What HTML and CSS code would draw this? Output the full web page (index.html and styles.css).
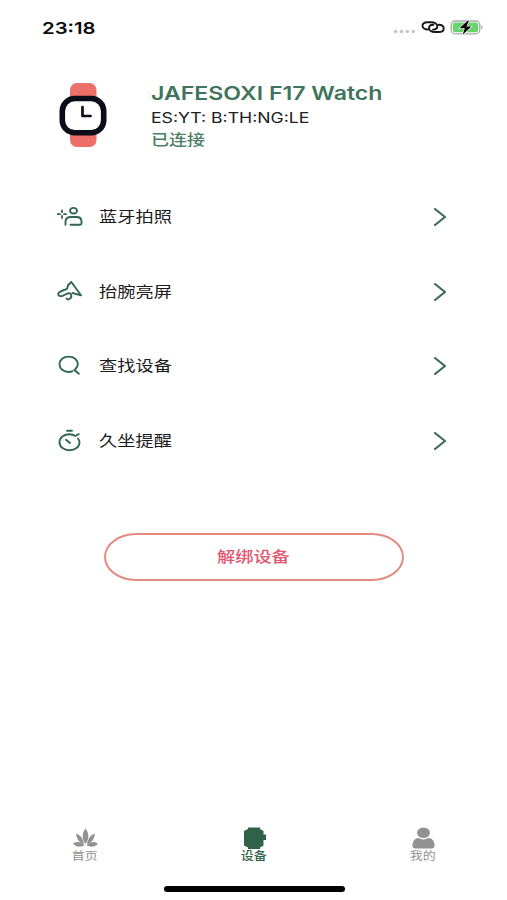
FILE: index.html
```html
<!DOCTYPE html>
<html lang="zh-CN">
<head>
<meta charset="utf-8">
<title>设备</title>
<link rel="stylesheet" href="styles.css">
</head>
<body>
<main class="screen">
  <header class="status">
    <span class="clock wide">23:18</span>
    <svg class="status-icons" viewBox="0 0 92 20" width="92" height="20">
      <g fill="#c6c6c8"><circle cx="3.500" cy="13.500" r="1.800"/><circle cx="9.500" cy="13.500" r="1.800"/><circle cx="15.300" cy="13.500" r="1.800"/><circle cx="21.300" cy="13.500" r="1.800"/></g>
      <g fill="none" stroke="#17171b" stroke-width="1.900" stroke-linecap="round">
        <path d="M36 11.500C33 11.500 30.500 10 30.500 7.800C30.500 5.600 32.500 4.200 35.500 4.200H39C42.500 4.200 45.300 5.800 45.300 8.200C45.300 10.300 43.500 11.600 41 11.600"/>
        <path d="M41.500 6.700C38.500 6.700 37 8 37 10C37 12.400 39.500 14 43 14H46.500C49.800 14 51.700 12.500 51.700 10.400C51.700 8.200 49.500 6.900 46.500 6.800"/>
      </g>
      <rect x="59.200" y="3" width="28.600" height="12.800" rx="4" fill="#fff" stroke="#aaa9ac" stroke-width="1.300"/>
      <rect x="60.800" y="4.600" width="25.400" height="9.600" rx="2.500" fill="#68d46b"/>
      <path d="M89.300 7.300Q91.600 9.300 89.300 11.300Z" fill="#8e8e90"/>
      <path d="M75.500 2.800L67.500 10.300H72.800L70.700 16.800L79.300 8.500H74.400L77 2.800Z" fill="#000" stroke="#fff" stroke-width="1.200" paint-order="stroke"/>
    </svg>
  </header>

  <section class="device">
    <svg class="watch" viewBox="0 0 48 66" width="48" height="66">
      <rect x="11" y="1" width="26.500" height="64" rx="7" fill="#ed6f69"/>
      <rect x="3.300" y="16.500" width="41.400" height="34.300" rx="12.500" fill="#fff" stroke="#0c0c18" stroke-width="5.600"/>
      <path d="M23.500 25.200V34H31.500" fill="none" stroke="#0c0c18" stroke-width="2.700" stroke-linecap="round" stroke-linejoin="round"/>
    </svg>
    <div class="info">
      <h1 class="name wide">JAFESOXI F17 Watch</h1>
      <p class="address wide">ES:YT: B:TH:NG:LE</p>
      <p class="state wide">已连接</p>
    </div>
  </section>

  <nav class="options">
    <a class="option">
      <svg class="icon" viewBox="0 0 28 24" width="28" height="24">
        <ellipse cx="17.500" cy="5.700" rx="3.500" ry="2.800"/>
        <path d="M9.500 19.800V17Q9.500 12 15 12H20.500Q25.500 12 25.500 16.500V18.300Q25.500 19.800 24 19.800H14.500"/>
        <path d="M6 5.300V7.200M6 11V13M1.800 9.200H4M8 9.200H10" stroke-width="1.800"/>
      </svg>
      <span class="label wide">蓝牙拍照</span>
      <svg class="chevron" viewBox="0 0 14 20" width="14" height="20"><path d="M2 2L12 10L2 18"/></svg>
    </a>
    <a class="option">
      <svg class="icon" viewBox="0 0 28 24" width="28" height="24">
        <path d="M12.300 5L15.300 2L25 15.300L16.500 13"/>
        <path d="M12.300 5L11 8.800L4.500 11.500Q1.500 13 2.500 15Q3.500 16.700 6.500 15.800L11.500 13.500Q14.500 12.500 15.200 15Q16 17.500 13.500 19Q11.500 20 10.500 18.500"/>
      </svg>
      <span class="label wide">抬腕亮屏</span>
      <svg class="chevron" viewBox="0 0 14 20" width="14" height="20"><path d="M2 2L12 10L2 18"/></svg>
    </a>
    <a class="option">
      <svg class="icon" viewBox="0 0 28 24" width="28" height="24">
        <path d="M16.500 17.200Q14.800 18 12.700 18C7.500 18 3.500 14.800 3.500 10.300S7.500 2.600 12.700 2.600S21.800 5.800 21.800 10.300Q21.800 12.800 19.500 15L18.300 16L22.800 19.800"/>
      </svg>
      <span class="label wide">查找设备</span>
      <svg class="chevron" viewBox="0 0 14 20" width="14" height="20"><path d="M2 2L12 10L2 18"/></svg>
    </a>
    <a class="option">
      <svg class="icon" viewBox="0 0 28 24" width="28" height="24">
        <path d="M22 9.500Q23.500 11.300 23.500 13.300C23.500 18 19 21.300 13.500 21.300S3.500 18 3.500 13.300S8 5.300 13.500 5.300Q16.500 5.300 19.500 7L22.800 5M11 1.800H16M10 10.800L14 14"/>
      </svg>
      <span class="label wide">久坐提醒</span>
      <svg class="chevron" viewBox="0 0 14 20" width="14" height="20"><path d="M2 2L12 10L2 18"/></svg>
    </a>
  </nav>

  <button class="unbind"><span class="unbind-text">解绑设备</span></button>

  <footer class="tabs">
    <a class="tab">
      <svg class="tab-icon" viewBox="0 0 28 24" width="28" height="24" fill="#929292">
        <path d="M14.500 1.500C18.500 7 18 12.500 14.500 17C11 12.500 10.500 7 14.500 1.500Z"/>
        <path d="M5 6.500C9.500 8 12 11.500 13 17.500C8.500 16 5.500 12 5 6.500ZM24 6.500C19.500 8 17 11.500 16 17.500C20.500 16 23.500 12 24 6.500Z"/>
        <path d="M2 16.500C6 13.500 10.500 15 13.500 18.500C9 20.500 5 20 2 16.500ZM27 16.500C23 13.500 18.500 15 15.500 18.500C20 20.500 24 20 27 16.500Z"/>
      </svg>
      <span class="tab-text">首页</span>
    </a>
    <a class="tab active">
      <svg class="tab-icon" viewBox="0 0 28 24" width="28" height="24">
        <path d="M8 0.500H20V2L23.500 4V7.500H26V13H23.500V18.500L20 20.500V22H8V20.500L4 18.500V4L8 2Z" fill="#2f6249"/>
      </svg>
      <span class="tab-text">设备</span>
    </a>
    <a class="tab">
      <svg class="tab-icon" viewBox="0 0 28 24" width="28" height="24" fill="#929292">
        <ellipse cx="14.500" cy="5.700" rx="6.500" ry="5.200"/>
        <path d="M3.500 19Q3.500 11.300 9.500 11Q14.500 13.800 19.500 11Q25.500 11.300 25.500 19Q25.500 21.500 22.500 21.500H6.500Q3.500 21.500 3.500 19Z"/>
      </svg>
      <span class="tab-text">我的</span>
    </a>
  </footer>
  <div class="home-bar"></div>
</main>
</body>
</html>
```
FILE: styles.css
```css
* { box-sizing: border-box; }
body { margin: 0; background: #fff; font-family: Inter, "Noto Sans CJK SC", sans-serif; }
h1, p { margin: 0; }
.screen { width: 507px; height: 900px; display: flex; flex-direction: column; overflow: hidden; background: #fff; }
.wide { display: block; width: max-content; transform: scaleX(1.2); transform-origin: left center; white-space: nowrap; }

.status { height: 55px; padding: 0 23px 0 41.500px; display: flex; justify-content: space-between; align-items: center; }
.clock { font-size: 16.500px; font-weight: 600; color: #0c0c0e; transform: scaleX(1.230); }

.device { height: 125px; padding: 27px 0 0 59px; display: flex; gap: 43.500px; align-items: flex-start; }
.watch { flex: none; }
.name { font-size: 19px; line-height: 24px; font-weight: 600; color: #40755b; transform: scaleX(1.216); }
.address { margin-top: 1px; font-size: 14px; line-height: 21px; color: #202020; transform: scaleX(1.260); }
.state { margin-top: 1px; font-size: 15px; line-height: 22px; font-weight: 500; color: #4c7f66; }

.options { display: flex; flex-direction: column; }
.option { height: 74.600px; padding: 0 60px 0 56px; display: flex; align-items: center; }
.icon { margin-right: 14.500px; fill: none; stroke: #316650; stroke-width: 1.900; stroke-linecap: round; stroke-linejoin: round; }
.label { font-size: 15.200px; line-height: 24px; color: #1b1b1b; }
.chevron { margin-left: auto; fill: none; stroke: #386955; stroke-width: 2.100; stroke-linecap: round; stroke-linejoin: round; }

.unbind { width: 300px; height: 48px; margin: 55px 0 0 104px; padding: 0; border: 2px solid #e48a80; border-radius: 32px / 24px; background: #fff; font-family: inherit; }
.unbind-text { display: inline-block; font-size: 15.200px; line-height: 24px; font-weight: 500; color: #e3566f; transform: translateX(-1px) scaleX(1.2); }

.tabs { margin-top: auto; height: 60px; display: grid; grid-template-columns: repeat(3, 169px); }
.tab { padding-top: 1px; display: flex; flex-direction: column; align-items: center; color: #929292; }
.tab-text { margin-top: -1px; font-size: 10.800px; line-height: 14px; transform: scaleX(1.2); }
.active { color: #2f6249; font-weight: 500; }
.home-bar { width: 181px; height: 6px; margin: 0 0 8px 163.500px; border-radius: 3px; background: #000; }
```
